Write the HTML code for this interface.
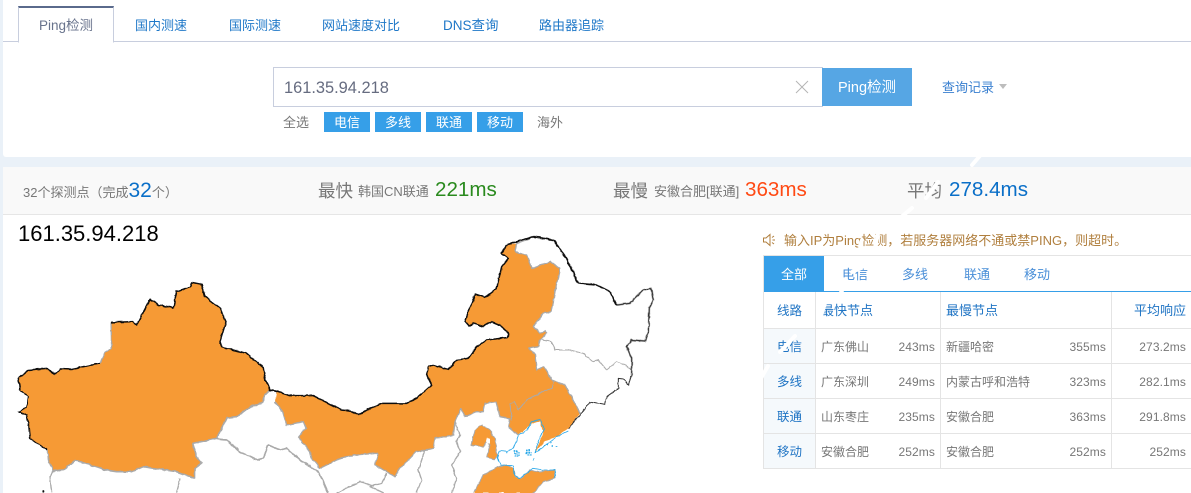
<!DOCTYPE html>
<html lang="zh"><head><meta charset="utf-8"><title>Ping检测</title>
<style>
html,body{margin:0;padding:0}
body{width:1191px;height:493px;overflow:hidden;position:relative;background:#eaf1f8;font-family:"Liberation Sans","Noto Sans CJK SC",sans-serif;color:#777}
div,span,a{position:absolute;white-space:nowrap}
span.i{position:static}
.top{left:3px;top:0;width:1188px;height:157px;background:#fff;border-radius:0 0 0 3px}
.tl{left:3px;top:41px;width:1188px;height:1px;background:#c8cede}
.at{left:18px;top:6px;width:94px;height:34px;background:#fff;border:1px solid #c8cede;border-top:2px solid #5a6a8c;border-bottom:1px solid #fff}
.t{top:17px;font-size:13px;line-height:18px;color:#1f78c8}
.inp{left:273px;top:67px;width:548px;height:38px;background:#fff;border:1px solid #c8cede}
.btn{left:822px;top:68px;width:90px;height:38px;background:#56a6e4;color:#fff;font-size:14.5px;line-height:41px;text-align:center}
.tag{top:112px;width:46px;height:20px;background:#369fe8;color:#fff;font-size:13px;line-height:21px;text-align:center}
.g13{font-size:13px;line-height:21px;color:#777;top:112px}
.bar{left:3px;top:167px;width:1188px;height:47px;background:#f9f9f9;border-bottom:1px solid #e6e6e6}
.main{left:3px;top:215px;width:1188px;height:278px;background:#fff}
.s{font-size:17.5px;line-height:24px;top:179px;color:#777}
.xs{font-size:13px;line-height:20px;top:182px;color:#777}
.v{font-size:20.6px;line-height:24px;top:178px}
.tb{top:266px;font-size:13px;line-height:18px;color:#4a8fd8}
.h{background:#e4e4e4}
.th{font-size:13px;line-height:18px;color:#1f74c4}
.c{font-size:12px;line-height:18px;color:#777}
.m{font-size:12px;letter-spacing:.1px;line-height:18px;color:#777}
.rh{left:764px;width:51px;text-align:center;font-size:12.5px}
</style></head><body>
<div class="top"></div>
<div class="tl"></div>
<div class="at"></div>
<div class="t" style="left:39px;color:#68738c;font-size:13.5px">Ping检测</div>
<div class="t" style="left:135px">国内测速</div>
<div class="t" style="left:229px">国际测速</div>
<div class="t" style="left:322px">网站速度对比</div>
<div class="t" style="left:443px;font-size:13.5px">DNS查询</div>
<div class="t" style="left:539px">路由器追踪</div>

<div class="inp"></div>
<div style="left:284px;top:78px;font-size:16.4px;line-height:20px;color:#666c80">161.35.94.218</div>
<svg style="position:absolute;left:795px;top:80px" width="14" height="14"><path d="M1 1L13 13M13 1L1 13" stroke="#b5b5b5" stroke-width="1" fill="none"/></svg>
<div class="btn">Ping检测</div>
<div style="left:942px;top:79px;font-size:13px;line-height:18px;color:#3a80d0">查询记录</div>
<svg style="position:absolute;left:999px;top:84px" width="9" height="6"><path d="M0 0H8L4 5Z" fill="#bdbdbd"/></svg>

<div class="g13" style="left:283px">全选</div>
<div class="tag" style="left:324px">电信</div>
<div class="tag" style="left:375px">多线</div>
<div class="tag" style="left:426px">联通</div>
<div class="tag" style="left:477px">移动</div>
<div class="g13" style="left:537px">海外</div>

<div class="bar"></div>
<div style="left:23px;top:178px;font-size:13px;line-height:26px;color:#777">32个探测点（完成<span class="i" style="font-size:21px;color:#0a6fc8">32</span>个）</div>
<div class="s" style="left:318px">最快</div>
<div class="xs" style="left:358px">韩国CN联通</div>
<div class="v" style="left:435px;color:#2a8a1e">221ms</div>
<div class="s" style="left:613px">最慢</div>
<div class="xs" style="left:654px">安徽合肥[联通]</div>
<div class="v" style="left:745px;color:#ff4a14">363ms</div>
<div class="s" style="left:907px">平均</div>
<div class="v" style="left:949px;color:#0a6fc8">278.4ms</div>

<div class="main"></div>
<div style="left:18px;top:222px;font-size:22px;line-height:24px;color:#000">161.35.94.218</div>

<svg style="position:absolute;left:0;top:0" width="1191" height="493" viewBox="0 0 1191 493">
<defs><filter id="rough" filterUnits="userSpaceOnUse" x="0" y="220" width="760" height="273"><feTurbulence type="fractalNoise" baseFrequency=".18" numOctaves="2" seed="4" result="n"/><feDisplacementMap in="SourceGraphic" in2="n" scale="2.5" xChannelSelector="R" yChannelSelector="G"/></filter></defs>
<g filter="url(#rough)">
<g transform="translate(0,215) scale(.33333)" stroke-linejoin="round" fill="none">
<path fill="#f69a36" stroke="none" d="M55 490L85 465L140 460L165 478L180 460L215 462L300 445L315 412L335 400L333 322L400 320L410 330L450 253L475 270L520 278L530 230L570 215L575 202L605 208L615 245L660 280L678 320L660 380L665 395L710 408L740 415L790 458L795 490L810 525L795 540L785 565L750 575L710 605L680 608L650 670L578 685L590 725L605 745L585 760L585 790L530 770L430 755L395 770L350 770L315 765L270 750L225 735L190 765L160 768L145 735L143 705L90 670L85 625L80 600L55 590L80 580L85 545L60 525Z"/>
<path stroke="#aaa" stroke-width="5" d="M810 525L795 540L785 565L750 575L710 605L680 608L650 670L578 685L590 725L605 745L585 760L585 790L530 770L430 755L395 770L350 770L315 765L270 750L225 735L190 765L160 768"/>
<path stroke="#aaa" stroke-width="4" d="M333 322L335 400L315 412L300 445M143 705L145 735L160 768"/>
<path stroke="#111" stroke-width="4.5" d="M60 525L55 490L85 465L140 460L165 478L180 460L215 462L300 445M333 322L400 320L410 330L450 253L475 270L520 278L530 230L570 215L575 202L605 208L615 245L660 280L678 320L660 380L665 395L710 408L740 415L790 458L795 490L810 525L835 530"/>
<path stroke="#111" stroke-width="3.5" d="M60 525L85 545L80 580L55 590L80 600L85 625L90 670L143 705"/>
<path stroke="#aaa" stroke-width="5" d="M650 672L680 675L720 710L770 735L790 730L805 690L840 705L860 700L900 735L955 770L970 800L985 834"/>
<path stroke="#aaa" stroke-width="4" d="M160 768L150 785L155 834M540 790L530 834"/>
<circle cx="130" cy="830" r="3" fill="#111"/>
</g>
<g transform="translate(370,225) scale(.33333)" stroke-linejoin="round" fill="none">
<path fill="#f69a36" stroke="none" d="M395 85L410 60L440 55L435 80L455 85L470 90L485 130L540 110L570 130L555 200L545 260L520 265L490 305L510 325L525 318L530 325L510 345L505 365L478 370L495 390L500 435L520 425L545 465L585 480L630 565L595 610L560 635L530 645L495 680L510 650L520 625L510 590L485 595L445 630L415 605L420 580L390 575L378 530L345 535L340 560L320 560L285 575L272 550L255 590L250 630L195 640L190 670L140 680L90 730L75 755L50 740L15 720L25 685L-50 690L-100 705L-150 730L-175 700L-180 680L-215 635L-192 610L-200 590L-250 600L-262 560L-285 530L-280 498L-240 512L-170 512L-125 535L-85 555L-50 560L-35 570L0 550L40 535L110 535L140 520L185 480L170 450L175 425L190 420L235 433L260 405L295 400L320 365L350 345L410 338L415 325L390 300L365 290L340 305L310 295L298 305L285 290L315 207L345 217L380 190L395 125L415 100Z"/>
<path fill="#f69a36" stroke="#aaa" stroke-width="3" d="M335 600L365 620L365 632L378 640L380 680L385 690L375 705L350 695L360 660L350 650L340 665L303 660L315 615Z"/>
<path fill="#fff" stroke="none" d="M350 640h10v15h-10z"/>
<path fill="#f69a36" stroke="#aaa" stroke-width="3" d="M310 804L340 750L385 725L410 720L430 730L435 755L455 760L480 735L500 740L555 735L555 760L520 770L490 804"/>
<path stroke="#aaa" stroke-width="4" d="M440 55L435 80L455 85L470 90L485 130L540 110L570 130L555 200L545 260L520 265L490 305L510 325L525 318L530 325L510 345L505 365L478 370L495 390L500 435L520 425L545 465L585 480L630 565"/>
<path stroke="#aaa" stroke-width="4" d="M445 630L415 605L420 580L390 575L378 530L345 535L340 560L320 560L285 575L272 550L255 590L250 630L195 640L190 670L140 680L90 730L75 755L50 740L15 720L25 685L-50 690L-100 705L-150 730L-175 700L-180 680L-215 635L-192 610L-200 590L-250 600L-262 560L-285 530"/>
<path stroke="#aaa" stroke-width="3" d="M515 345L545 350L555 375L600 375L640 385L670 410L685 405L710 435L740 410L785 430"/>
<path stroke="#aaa" stroke-width="3" d="M550 470L545 490L510 505L470 525L445 555L435 530L420 535L425 585"/>
<path stroke="#aaa" stroke-width="4" d="M255 590L270 630L258 650L272 680L245 720L260 760L245 804M165 675L145 735L155 765L140 804M50 745L35 775L0 785L40 804M15 785L-30 770L-100 804"/>
<path stroke="#aaa" stroke-width="6" d="M440 55L490 35L550 45L590 100L625 175L680 180L720 200L740 240L780 235L820 195L843 190L850 225L838 250L835 320L825 348L785 345L770 365L785 400L785 450"/>
<path stroke="#111" stroke-width="4.5" d="M-285 498L-240 512L-170 512L-125 535L-85 555L-50 560L-35 570L0 550L40 535L110 535L140 520L185 480L170 450L175 425L190 420L235 433L260 405L295 400L320 365L350 345L410 338L415 325L390 300L365 290L340 305L310 295L298 305L285 290L315 207L345 217L380 190L395 125L415 100L395 85L410 60L440 50L490 35L550 45L590 100L625 175L680 180L720 200L740 240"/>
<path stroke="#333" stroke-width="3" d="M740 240L780 235L820 195L843 190L850 225L838 250L835 320L825 348L785 345L770 365L785 400L785 450L775 480L760 462L745 460L745 490L710 515L705 538L660 530L630 570L595 610"/>
<path stroke="#2aa8e8" stroke-width="2.5" d="M445 632L430 670L410 680L388 678L383 700L392 720L430 722L432 750L450 760L470 745L490 730L520 735L555 735L558 750L550 760M445 632L470 615L485 590L510 585L522 610L510 640L500 665L495 682L520 665L560 635L595 618"/>
<g fill="#2aa8e8"><path d="M431 677h5v5h-5zM438 677h5v5h-5zM445 680h4v4h-4zM431 684h5v5h-5zM438 684h5v5h-5zM445 687h4v4h-4zM434 691h5v4h-5zM441 691h5v4h-5zM468 674h5v5h-5zM475 674h5v5h-5zM468 681h5v5h-5zM475 681h5v5h-5zM482 681h4v4h-4zM472 688h5v4h-5zM480 688h5v4h-5z"/><rect x="545" y="662" width="4" height="4"/><rect x="558" y="660" width="4" height="4"/><rect x="530" y="656" width="4" height="4"/><rect x="408" y="682" width="4" height="4"/><rect x="488" y="702" width="4" height="4"/><rect x="540" y="652" width="4" height="4"/></g>
</g>
</g>
</svg>

<svg style="position:absolute;left:762px;top:233px" width="14" height="14"><path d="M1.5 5H4L8 1.5V12.5L4 9H1.5ZM10 4.5L12 3M10.5 7H13M10 9.5L12 11" fill="none" stroke="#b07f3e" stroke-width="1"/></svg>
<div style="left:784px;top:232px;font-size:13px;line-height:18px;color:#b07f3e">输入IP为Ping检测，若服务器网络不通或禁PING，则超时。</div>

<div class="h" style="left:763px;top:255px;width:428px;height:1px"></div>
<div class="h" style="left:763px;top:255px;width:1px;height:214px"></div>
<div style="left:764px;top:256px;width:60px;height:35px;background:#369fe8;color:#fff;font-size:13px;line-height:37px;text-align:center">全部</div>
<div style="left:764px;top:291px;width:427px;height:1px;background:#369fe8"></div>
<div class="tb" style="left:842px">电信</div>
<div class="tb" style="left:902px">多线</div>
<div class="tb" style="left:964px">联通</div>
<div class="tb" style="left:1024px">移动</div>

<div style="left:764px;top:329px;width:51px;height:139px;background:#f5f9fc"></div>
<div class="h" style="left:815px;top:292px;width:1px;height:177px"></div>
<div class="h" style="left:940px;top:292px;width:1px;height:177px"></div>
<div class="h" style="left:1111px;top:292px;width:1px;height:177px"></div>
<div class="h" style="left:764px;top:328px;width:427px;height:1px"></div>
<div class="h" style="left:764px;top:363px;width:427px;height:1px"></div>
<div class="h" style="left:764px;top:398px;width:427px;height:1px"></div>
<div class="h" style="left:764px;top:433px;width:427px;height:1px"></div>
<div class="h" style="left:764px;top:468px;width:427px;height:1px"></div>

<div class="th rh" style="top:302px">线路</div>
<div class="th" style="left:821px;top:302px">最快节点</div>
<div class="th" style="left:946px;top:302px">最慢节点</div>
<div class="th" style="right:5px;top:302px">平均响应</div>

<div class="th rh" style="top:338px">电信</div>
<div class="c" style="left:821px;top:338px">广东佛山</div>
<div class="m" style="right:256px;top:338px">243ms</div>
<div class="c" style="left:946px;top:338px">新疆哈密</div>
<div class="m" style="right:85px;top:338px">355ms</div>
<div class="m" style="right:5px;top:338px">273.2ms</div>

<div class="th rh" style="top:373px">多线</div>
<div class="c" style="left:821px;top:373px">广东深圳</div>
<div class="m" style="right:256px;top:373px">249ms</div>
<div class="c" style="left:946px;top:373px">内蒙古呼和浩特</div>
<div class="m" style="right:85px;top:373px">323ms</div>
<div class="m" style="right:5px;top:373px">282.1ms</div>

<div class="th rh" style="top:408px">联通</div>
<div class="c" style="left:821px;top:408px">山东枣庄</div>
<div class="m" style="right:256px;top:408px">235ms</div>
<div class="c" style="left:946px;top:408px">安徽合肥</div>
<div class="m" style="right:85px;top:408px">363ms</div>
<div class="m" style="right:5px;top:408px">291.8ms</div>

<div class="th rh" style="top:443px">移动</div>
<div class="c" style="left:821px;top:443px">安徽合肥</div>
<div class="m" style="right:256px;top:443px">252ms</div>
<div class="c" style="left:946px;top:443px">安徽合肥</div>
<div class="m" style="right:85px;top:443px">252ms</div>
<div class="m" style="right:5px;top:443px">252ms</div>

<svg style="position:absolute;left:0;top:0" width="1191" height="493"><g stroke="#fff" fill="none" stroke-width="4" stroke-linecap="round"><path d="M985 150L972 165M938 182L926 198M912 208L900 218M878 234L875 248M862 240L860 246M852 272L861 268M845 285L838 298M826 300L821 316M795 336L780 352M768 366L760 380"/></g></svg>
</body></html>
